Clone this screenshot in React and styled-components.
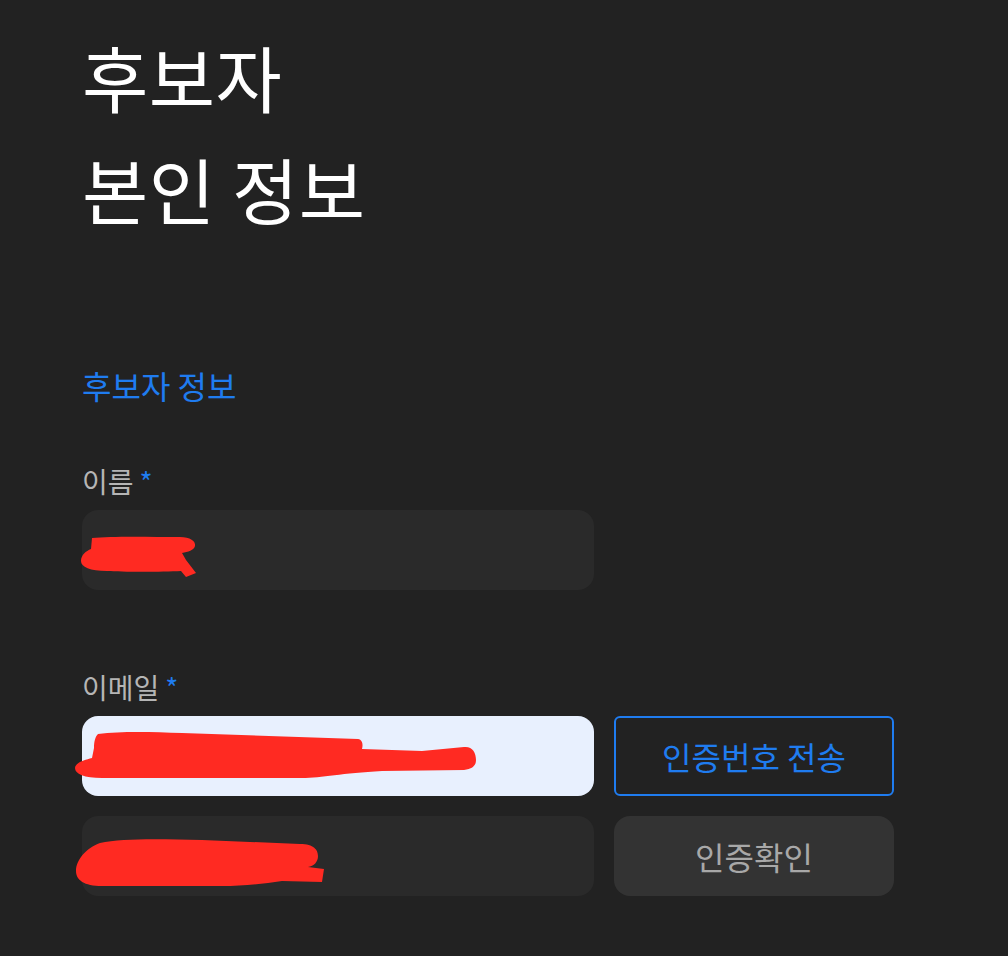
import React from "react";
import styled, { createGlobalStyle } from "styled-components";

const GlobalStyle = createGlobalStyle`
    html, body {
        margin: 0;
        padding: 0;
        background-color: #222222;
    }
    body {
        font-family: "Noto Sans CJK KR", "Noto Sans", sans-serif;
    }
`

const Page = styled.div`
    width: 100%;
    min-height: 956px;
    box-sizing: border-box;
    padding: 20px 0 0 82px;
    background-color: #222222;
`

const Title = styled.h1`
    margin: 0;
    font-size: 72px;
    font-weight: 400;
    line-height: 112px;
    letter-spacing: 0.5px;
    color: #ffffff;
`

const SectionTitle = styled.h2`
    margin: 121px 0 0 0;
    font-size: 32px;
    font-weight: 400;
    line-height: 40px;
    color: #1f7cf0;
`

const Form = styled.div`
    display: flex;
    flex-direction: column;
    gap: 80px;
    margin-top: 59px;
`

const Field = styled.div`
    display: flex;
    flex-direction: column;
    gap: 12px;
`

const Label = styled.label`
    display: block;
    height: 34px;
    font-size: 28px;
    line-height: 34px;
    color: #b5b5b5;

    span{
        margin-left: 6px;
        color: #1f7cf0;
    }
`

const Rows = styled.div`
    display: flex;
    flex-direction: column;
    gap: 20px;
`

const Row = styled.div`
    display: flex;
    gap: 20px;
`

const InputWrap = styled.div`
    position: relative;
    width: 512px;
    height: 80px;
`

const Input = styled.input`
    width: 100%;
    height: 100%;
    box-sizing: border-box;
    border: none;
    outline: none;
    border-radius: 16px;
    padding: 0 20px;
    font-family: inherit;
    font-size: 28px;
    background-color: ${(p) => (p.$filled ? "#e8f0fe" : "#2a2a2a")};
    color: ${(p) => (p.$filled ? "#111" : "#fff")};
`

const Redact = styled.svg`
    position: absolute;
    left: 0;
    top: 0;
    width: 512px;
    height: 80px;
    overflow: visible;
    pointer-events: none;
`

const Button = styled.button`
    width: 280px;
    height: 80px;
    box-sizing: border-box;
    font-family: inherit;
    font-size: 32px;
    cursor: pointer;
    border-radius: ${(p) => (p.$outline ? "6px" : "16px")};
    border: ${(p) => (p.$outline ? "2px solid #1f7cf0" : "none")};
    background-color: ${(p) => (p.$outline ? "transparent" : "#333333")};
    color: ${(p) => (p.$outline ? "#1f7cf0" : "#a8a8a8")};
`

// 가려진 부분 (빨간 낙서)
const scribbles = {
    name: "M 10 28 C 30 26 70 27 98 27 C 108 27 114 31 113 36 C 112 40 106 42 100 43 L 104 50 L 114 63 L 104 67 L 99 61 C 80 62 40 62 25 61 C 8 61 -1 57 -1 51 C -1 45 4 41 9 39 Z",
    email: "M 16 18 C 40 15 70 16 100 17 L 276 23 C 281 24 281 29 280 33 L 340 35 L 382 31 C 390 30 394 36 394 44 C 394 50 390 53 382 54 L 300 55 C 260 57 240 62 220 62 L 20 62 C 2 62 -7 58 -7 52 C -7 47 2 44 10 42 L 12 32 C 12 26 13 21 16 18 Z",
    code: "M 18 27 C 40 22 80 23 120 24 L 218 28 C 232 28 236 34 236 40 C 236 46 232 50 226 51 L 242 53 L 240 66 L 200 65 C 180 68 160 70 140 70 L 20 70 C 2 70 -6 64 -6 55 C -6 44 4 32 18 27 Z",
}

const Scribble = ({ d }) => (
    <Redact viewBox="0 0 512 80">
        <path d={d} fill="#ff2a22" />
    </Redact>
)

const App = () => {
    return (
        <Page>
            <GlobalStyle />
            <Title>
                후보자<br />
                본인 정보
            </Title>
            <SectionTitle>후보자 정보</SectionTitle>
            <Form>
                <Field>
                    <Label>이름<span>*</span></Label>
                    <InputWrap>
                        <Input readOnly />
                        <Scribble d={scribbles.name} />
                    </InputWrap>
                </Field>
                <Field>
                    <Label>이메일<span>*</span></Label>
                    <Rows>
                        <Row>
                            <InputWrap>
                                <Input readOnly $filled />
                                <Scribble d={scribbles.email} />
                            </InputWrap>
                            <Button $outline>인증번호 전송</Button>
                        </Row>
                        <Row>
                            <InputWrap>
                                <Input readOnly />
                                <Scribble d={scribbles.code} />
                            </InputWrap>
                            <Button>인증확인</Button>
                        </Row>
                    </Rows>
                </Field>
            </Form>
        </Page>
    )
}

export default App;
